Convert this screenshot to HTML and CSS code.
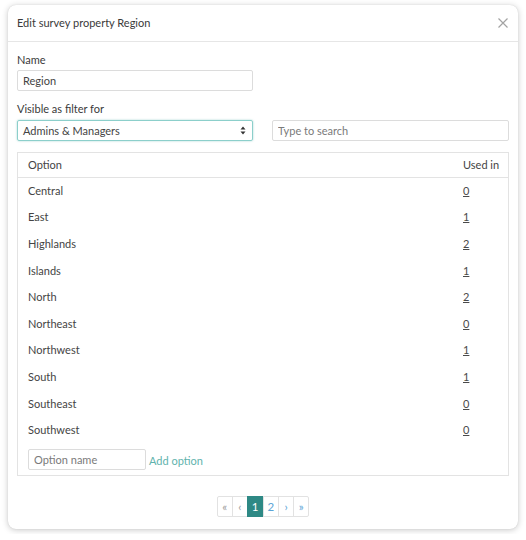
FILE: index.html
```html
<!DOCTYPE html>
<html lang="en">
<head>
<meta charset="utf-8">
<title>Edit survey property Region</title>
<link rel="stylesheet" href="styles.css">
</head>
<body>
<div class="modal">
  <div class="modal-header">
    <span class="modal-title">Edit survey property Region</span>
    <button class="close" aria-label="Close">
      <svg width="10" height="10" viewBox="0 0 10 10"><path d="M0.5 0.5L9.5 9.5M9.5 0.5L0.5 9.5" stroke="#a3a3a3" stroke-width="1.2" fill="none"/></svg>
    </button>
  </div>
  <div class="modal-body">
    <div class="field">
      <label class="label">Name</label>
      <div class="half"><input class="input" type="text" value="Region"></div>
    </div>
    <div class="field">
      <label class="label">Visible as filter for</label>
      <div class="filter-row">
        <div class="select">
          <span>Admins &amp; Managers</span>
          <svg width="6" height="9" viewBox="0 0 6 9"><path d="M3 0.5L5.5 3.5H0.5Z M3 8.5L5.5 5.5H0.5Z" fill="#333"/></svg>
        </div>
        <input class="input" type="text" placeholder="Type to search">
      </div>
    </div>
    <div class="options">
      <div class="row head"><span>Option</span><span>Used in</span></div>
      <div class="row"><span>Central</span><a class="count">0</a></div>
      <div class="row"><span>East</span><a class="count">1</a></div>
      <div class="row"><span>Highlands</span><a class="count">2</a></div>
      <div class="row"><span>Islands</span><a class="count">1</a></div>
      <div class="row"><span>North</span><a class="count">2</a></div>
      <div class="row"><span>Northeast</span><a class="count">0</a></div>
      <div class="row"><span>Northwest</span><a class="count">1</a></div>
      <div class="row"><span>South</span><a class="count">1</a></div>
      <div class="row"><span>Southeast</span><a class="count">0</a></div>
      <div class="row"><span>Southwest</span><a class="count">0</a></div>
      <div class="add-row">
        <input class="input option-input" type="text" placeholder="Option name">
        <a class="add-link">Add option</a>
      </div>
    </div>
    <nav class="pager">
      <span class="page disabled">&laquo;</span>
      <span class="page disabled">&lsaquo;</span>
      <span class="page active">1</span>
      <span class="page">2</span>
      <span class="page">&rsaquo;</span>
      <span class="page">&raquo;</span>
    </nav>
  </div>
</div>
</body>
</html>
```
FILE: styles.css
```css
* { box-sizing: border-box; }

html, body {
  margin: 0;
  background: #ffffff;
}

body {
  padding: 5px 8px;
  font-family: Lato, "Open Sans", sans-serif;
  font-size: 11px;
  color: #444;
}

.modal {
  width: 510px;
  background: #fff;
  border-radius: 8px;
  box-shadow: 0 1px 6px rgba(0, 0, 0, 0.22), 0 0 1px rgba(0, 0, 0, 0.15);
}

.modal-header {
  display: flex;
  align-items: center;
  justify-content: space-between;
  height: 37px;
  padding: 0 10px 0 9px;
  border-bottom: 1px solid #e6e6e6;
}

.modal-title {
  line-height: 14px;
  color: #3a3a3a;
}

.close {
  border: 0;
  background: none;
  padding: 0;
  display: flex;
}

.modal-body {
  padding: 11px 9px 12px;
}

.field { margin-bottom: 11px; }

.label {
  display: block;
  line-height: 14px;
  margin-bottom: 3px;
  color: #3a3a3a;
}

.half { width: 236px; }

.input {
  display: block;
  width: 100%;
  height: 21px;
  padding: 0 5px;
  border: 1px solid #dcdcdc;
  border-radius: 2px;
  font: inherit;
  color: #444;
  background: #fff;
  outline: none;
}

.input::placeholder { color: #7a7a7a; }

.filter-row {
  display: grid;
  grid-template-columns: 236px 1fr;
  gap: 19px;
  padding-top: 1px;
}

.select {
  display: flex;
  align-items: center;
  justify-content: space-between;
  height: 21px;
  padding: 0 6px 0 5px;
  border: 1px solid #8ccfcb;
  border-radius: 2px;
  box-shadow: 0 0 2px rgba(90, 180, 175, 0.6);
}

.options {
  border: 1px solid #e3e3e3;
}

.row {
  display: grid;
  grid-template-columns: 1fr 36px;
  padding: 6.3px 9px 6.3px 10px;
  line-height: 14px;
  white-space: nowrap;
}

.row.head {
  padding: 4.5px 9px 5px 10px;
  border-bottom: 1px solid #e3e3e3;
}

.count {
  color: #4a4a4a;
  text-decoration: underline;
  text-underline-offset: 1px;
}

.add-row {
  display: flex;
  align-items: center;
  gap: 3px;
  padding: 6px 10px 5px;
}

.option-input { width: 118px; }

.add-link {
  color: #5fb3ad;
  margin-top: 2px;
}

.pager {
  display: flex;
  justify-content: center;
  margin-top: 20px;
}

.page {
  display: flex;
  align-items: center;
  justify-content: center;
  min-width: 16px;
  height: 21px;
  padding: 0 4px;
  border: 1px solid #e2e2e2;
  margin-left: -1px;
  color: #5ba4d6;
  font-size: 11.5px;
  line-height: 1;
}

.page:first-child { border-radius: 2px 0 0 2px; margin-left: 0; }
.page:last-child { border-radius: 0 2px 2px 0; }

.page.disabled { color: #9a9a9a; }

.page.active {
  background: #2e8985;
  border-color: #2e8985;
  color: #fff;
}
```
